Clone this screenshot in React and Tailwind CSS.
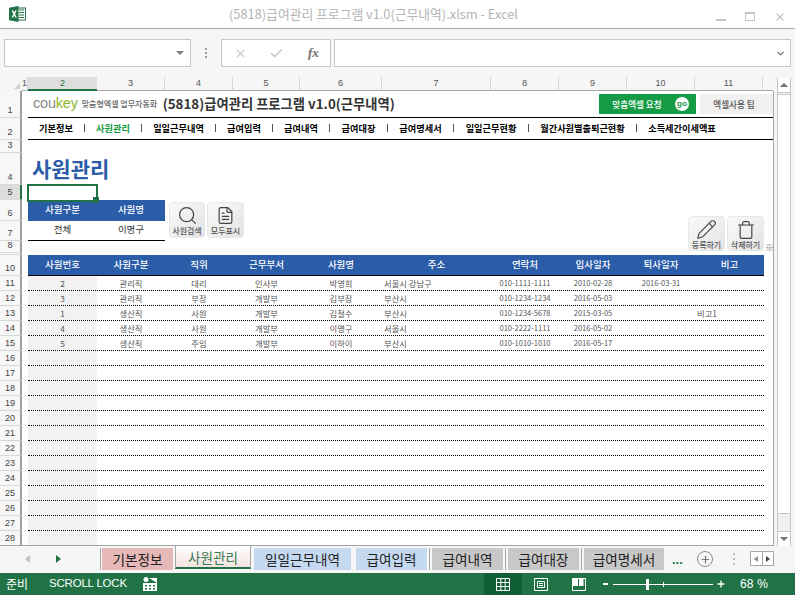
import React from "react";
import { Search, FileText, Pencil, Trash, Check, X, Plus, ChevronDown } from "lucide-react";

const COLS = "grid-cols-[69px_68px_68px_67px_82px_109px_68px_68px_68px_69px]";
const colLabels = [
  ["1", "w-[6px]"], ["2", "w-[69px]"], ["3", "w-[68px]"], ["4", "w-[68px]"], ["5", "w-[67px]"],
  ["6", "w-[82px]"], ["7", "w-[109px]"], ["8", "w-[68px]"], ["9", "w-[68px]"], ["10", "w-[68px]"], ["11", "w-[68px]"],
];
const nav = [
  ["기본정보", "w-[57px]"], ["사원관리", "w-[57px]"], ["일일근무내역", "w-[74px]"], ["급여입력", "w-[57px]"],
  ["급여내역", "w-[57px]"], ["급여대장", "w-[58px]"], ["급여명세서", "w-[66px]"], ["일일근무현황", "w-[75px]"],
  ["월간사원별출퇴근현황", "w-[108px]"], ["소득세간이세액표", "w-[90px]"],
];
const heads = ["사원번호", "사원구분", "직위", "근무부서", "사원명", "주소", "연락처", "입사일자", "퇴사일자", "비고"];
const rows = [
  ["2", "관리직", "대리", "인사부", "박영희", "서울시 강남구", "010-1111-1111", "2010-02-28", "2016-03-31", ""],
  ["3", "관리직", "부장", "개발부", "김부장", "부산시", "010-1234-1234", "2016-05-03", "", ""],
  ["1", "생산직", "사원", "개발부", "김철수", "부산시", "010-1234-5678", "2015-03-05", "", "비고1"],
  ["4", "생산직", "사원", "개발부", "이명구", "서울시", "010-2222-1111", "2016-05-02", "", ""],
  ["5", "생산직", "주임", "개발부", "이하이", "부산시", "010-1010-1010", "2016-05-17", "", ""],
];
const tabs = [
  ["기본정보", "w-[71px] bg-[#e6b8b7] ml-[1px]"],
  ["일일근무내역", "w-[97px] bg-[#c5d9f1] ml-[3px]"],
  ["급여입력", "w-[71px] bg-[#c5d9f1] ml-[5px]"],
];
const grayTabs = [["급여내역", "w-[71px]"], ["급여대장", "w-[71px]"], ["급여명세서", "w-[80px]"]];

function RowHead({ n, h, selected }) {
  return (
    <div
      className={`w-[22px] shrink-0 flex items-end justify-center pb-[1px] text-[9px] leading-[11px] text-[#444] border-b border-b-[#d8d8d8] border-r-2 ${selected ? "bg-[#dedede] border-r-[#217346]" : "bg-[#f7f7f7] border-r-[#9e9e9e]"}`}
      style={{ height: h, fontFamily: '"Liberation Sans", sans-serif' }}
    >
      {n}
    </div>
  );
}

function Row({ n, h, selected, children, className = "" }) {
  return (
    <div className="flex w-full" style={{ height: h }}>
      <RowHead n={n} h={h} selected={selected} />
      <div className={`flex-1 min-w-0 ${className}`}>{children}</div>
    </div>
  );
}

function ShapeButton({ className, icon, label }) {
  return (
    <div className={`absolute flex flex-col items-center rounded-[4px] border border-[#e8e8e8] bg-gradient-to-br from-[#fafafa] to-[#e2e3e5] ${className}`}>
      <div className="h-[21px] mt-[2px] flex items-center text-[#444]">{icon}</div>
      <div className="text-[8px] leading-[10px] text-[#555] font-medium whitespace-nowrap">{label}</div>
    </div>
  );
}

function ExcelLogo() {
  return (
    <svg width="17" height="16" viewBox="0 0 17 16">
      <rect x="6" y="2" width="10.5" height="12" fill="#fff" stroke="#217346" />
      <path d="M10 4h5M10 6.5h5M10 9h5M10 11.5h5" stroke="#217346" strokeWidth="1.2" />
      <path d="M0 1.8 9.5 0v16L0 14.2z" fill="#217346" />
      <path d="M2.5 4.6h1.7l1 2 1-2h1.6L6 8l1.9 3.4H6.200l-1-2.100-1 2.100H2.500L4.400 8z" fill="#fff" />
    </svg>
  );
}

export default function App() {
  return (
    <div
      className="w-[795px] h-[595px] overflow-hidden flex flex-col bg-[#f6f6f6]"
      style={{ fontFamily: '"Noto Sans CJK KR", "Liberation Sans", sans-serif' }}
    >
      {/* Title bar */}
      <div className="h-[29px] shrink-0 bg-white border-b border-[#a6a6a6] flex items-center relative">
        <div className="ml-[9px]"><ExcelLogo /></div>
        <div className="flex-1 text-center text-[12.8px] text-[#b4b4b4] pl-[4px] mr-[78px] whitespace-nowrap">
          (5818)급여관리 프로그램 v1.0(근무내역).xlsm - Excel
        </div>
        <div className="absolute right-[9px] top-[12px] flex items-start gap-[19px] text-[#b8b8b8]">
          <div className="w-[10px] h-[2px] mt-[7px] bg-[#c4c4c4]" />
          <div className="w-[10px] h-[9px] border border-[#c4c4c4] border-t-2" />
          <X size={12} strokeWidth={2.6} className="text-[#c4c4c4] -mt-[1px]" />
        </div>
      </div>

      {/* Formula bar */}
      <div className="h-[48px] shrink-0 flex items-start pt-[10px] pl-[4px]">
        <div className="w-[187px] h-[28px] bg-white border border-[#c6c6c6] flex items-center justify-end pr-[6px]">
          <div className="w-0 h-0 border-l-[4px] border-r-[4px] border-t-[4px] border-l-transparent border-r-transparent border-t-[#808080]" />
        </div>
        <div className="w-[30px] h-[28px] flex flex-col items-center justify-center gap-[2px]">
          <div className="w-[2px] h-[2px] bg-[#9a9a9a]" />
          <div className="w-[2px] h-[2px] bg-[#9a9a9a]" />
          <div className="w-[2px] h-[2px] bg-[#9a9a9a]" />
        </div>
        <div className="w-[110px] h-[28px] bg-white border border-[#c6c6c6] flex items-center pl-[12px]">
          <X size={13} strokeWidth={2} className="text-[#c8c8c8]" />
          <Check size={15} strokeWidth={2.4} className="text-[#c8c8c8] ml-[22px]" />
          <span className="ml-[24px] text-[13px] italic font-bold text-[#707070]" style={{ fontFamily: '"Liberation Serif", serif' }}>fx</span>
        </div>
        <div className="w-[457px] h-[28px] ml-[3px] bg-white border border-[#c6c6c6] flex items-center justify-end pr-[4px]">
          <ChevronDown size={11} strokeWidth={3} className="text-[#777]" />
        </div>
      </div>

      {/* Column headers */}
      <div className="h-[14px] shrink-0 flex" style={{ fontFamily: '"Liberation Sans", sans-serif' }}>
        <div className="w-[22px] flex items-end justify-end pr-[2px] pb-[2px]">
          <div className="w-0 h-0 border-l-[6px] border-b-[6px] border-l-transparent border-b-[#d0d0d0]" />
        </div>
        {colLabels.map(([c, w]) => (
          <div
            key={c}
            className={`${w} text-center text-[9px] leading-[13px] text-[#555] ${c === "2" ? "bg-[#dedede] border-b-2 border-b-[#217346] text-[#217346]" : "border-r border-r-[#d4d4d4] border-b border-b-[#a6a6a6]"}`}
          >
            {c}
          </div>
        ))}
        <div className="w-[10px] border-b border-b-[#a6a6a6]" />
      </div>

      {/* Sheet + scrollbar */}
      <div className="flex h-[455px] shrink-0">
        <div className="w-[774px] shrink-0 relative bg-white border-r border-r-[#a6a6a6] border-b border-b-[#a6a6a6] overflow-hidden">
          <Row n="1" h={27}>
            <div className="h-full ml-[6px] flex items-center justify-between border-b border-black">
              <div className="flex items-center pl-[5px] mb-[1px]">
                <span className="text-[14.5px] leading-none tracking-[-0.2px] text-[#8a8a8a]" style={{ fontFamily: '"Liberation Sans", sans-serif' }}>
                  cou<span className="text-[#8cb82b]">key</span>
                </span>
                <span className="text-[8px] ml-[4px] w-[74px] whitespace-nowrap font-medium text-[#666]">맞춤형엑셀 업무자동화</span>
                <span className="ml-[7px] text-[13.300px] font-bold text-[#333] whitespace-nowrap">(5818)급여관리 프로그램 v1.0(근무내역)</span>
              </div>
              <div className="flex items-center gap-[4px]">
                <div className="w-[97px] h-[20px] bg-[#169b45] flex items-center text-white">
                  <span className="w-[76px] text-center text-[8.6px] font-medium whitespace-nowrap">맞춤엑셀 요청</span>
                  <span className="w-[14px] h-[14px] rounded-full bg-white text-[#169b45] text-[8px] font-bold leading-[13px] text-center" style={{ fontFamily: '"Liberation Sans", sans-serif' }}>go</span>
                </div>
                <div className="w-[73px] h-[20px] pr-[5px] bg-[#f0f0f0] text-[#555] text-[8.6px] font-medium flex items-center justify-center">엑셀사용 팁</div>
              </div>
            </div>
          </Row>
          <Row n="2" h={22}>
            <div className="h-full ml-[6px] flex items-center border-b border-black text-[9.2px] font-bold text-black whitespace-nowrap">
              {nav.map(([t, w], i) => (
                <div key={t} className={`${w} shrink-0 flex items-center`}>
                  <span className={`flex-1 text-center ${i === 1 ? "text-[#169b45]" : ""}`}>{t}</span>
                  {i < nav.length - 1 && <span className="w-[1px] h-[8px] bg-[#555] shrink-0" />}
                </div>
              ))}
            </div>
          </Row>
          <Row n="3" h={13} />
          <Row n="4" h={32}>
            <div className="h-full pl-[10px] pb-[3px] flex items-end text-[21px] leading-[28px] font-bold text-[#2b5ca8]">사원관리</div>
          </Row>
          <Row n="5" h={15} selected />
          <Row n="6" h={21}>
            <div className="ml-[6px] w-[137px] h-full pb-[2px] bg-[#2b5ca8] flex items-center text-white text-[9.5px] font-medium">
              <span className="w-[69px] text-center">사원구분</span>
              <span className="w-[68px] text-center">사원명</span>
            </div>
          </Row>
          <Row n="7" h={20}>
            <div className="ml-[6px] w-[137px] h-full pb-[2px] border-b border-black flex items-center text-[#333] text-[9.5px]">
              <span className="w-[69px] text-center">전체</span>
              <span className="w-[68px] text-center">이명구</span>
            </div>
          </Row>
          <Row n="8" h={12} />
          <Row n="" h={2} />
          <Row n="10" h={21}>
            <div className={`h-full ml-[6px] w-[736px] grid ${COLS} bg-[#2b5ca8] border-b border-black`}>
              {heads.map((t) => (
                <div key={t} className="h-full pb-[1px] flex items-center justify-center text-white text-[9.5px] font-medium">{t}</div>
              ))}
            </div>
          </Row>
          {Array.from({ length: 18 }, (_, i) => {
            const d = rows[i] || Array(10).fill("");
            const last = i === 17;
            return (
              <Row key={i} n={String(i + 11)} h={15}>
                <div className={`h-full ml-[6px] w-[736px] grid ${COLS} ${last ? "" : "border-b border-dotted border-black"}`}>
                  {d.map((v, j) => (
                    <div
                      key={j}
                      className={`h-full flex items-center whitespace-nowrap text-[#555] ${j >= 6 && j <= 8 ? "text-[7.5px]" : "text-[8.3px]"} ${j === 0 ? "bg-[#f2f2f2]" : ""} ${j === 5 || j === 9 ? "justify-start pl-[2px]" : "justify-center"}`}
                    >
                      {v}
                    </div>
                  ))}
                </div>
              </Row>
            );
          })}

          {/* Floating objects over the sheet */}
          <div className="absolute left-[27px] top-[93px] w-[71px] h-[18px] border-2 border-[#217346]" />
          <div className="absolute left-[93px] top-[106px] w-[6px] h-[6px] bg-[#217346]" />
          <ShapeButton className="left-[169px] top-[111px] w-[36px] h-[36px]" icon={<Search size={21} strokeWidth={1.4} />} label="사원검색" />
          <ShapeButton className="left-[207px] top-[111px] w-[37px] h-[36px]" icon={<FileText size={19} strokeWidth={1.5} />} label="모두표시" />
          <ShapeButton className="left-[688px] top-[125px] w-[37px] h-[35px]" icon={<Pencil size={21} strokeWidth={1.3} />} label="등록하기" />
          <ShapeButton className="left-[727px] top-[125px] w-[37px] h-[35px]" icon={<Trash size={20} strokeWidth={1.4} />} label="삭제하기" />
          <div className="absolute left-[765px] top-[152px] text-[9px] leading-[10px] text-[#8a6a6a]">※</div>
        </div>

        {/* Vertical scrollbar */}
        <div className="ml-[3px] w-[14px] bg-[#f0f0f0] border-l border-r border-[#c6c6c6] flex flex-col -mt-[13px] h-[468px]">
          <div className="h-[15px] bg-white border-b border-[#c6c6c6] flex items-center justify-center">
            <div className="w-0 h-0 border-l-[4px] border-r-[4px] border-b-[4px] border-l-transparent border-r-transparent border-b-[#707070]" />
          </div>
          <div className="h-[420px] mt-[1px] bg-white border-y border-[#c6c6c6]" />
          <div className="flex-1" />
          <div className="h-[15px] bg-white border-t border-[#c6c6c6] flex items-center justify-center">
            <div className="w-0 h-0 border-l-[4px] border-r-[4px] border-t-[4px] border-l-transparent border-r-transparent border-t-[#707070]" />
          </div>
        </div>
      </div>

      {/* Sheet tabs */}
      <div className="h-[27px] shrink-0 flex items-start pt-[2px] text-[13.600px] text-[#222]">
        <div className="w-[100px] h-[22px] flex items-center">
          <div className="ml-[25px] w-0 h-0 border-t-[4px] border-b-[4px] border-r-[5px] border-t-transparent border-b-transparent border-r-[#c0c0c0]" />
          <div className="ml-[26px] w-0 h-0 border-t-[4px] border-b-[4px] border-l-[5px] border-t-transparent border-b-transparent border-l-[#217346]" />
        </div>
        <div className="w-[1px] h-[22px] bg-[#a8a8a8]" />
        <div className={`${tabs[0][1]} h-[22px] flex items-center justify-center`}>{tabs[0][0]}</div>
        <div className="ml-[2px] w-[76px] h-[23px] -mt-[2px] pt-[2px] bg-gradient-to-b from-white to-[#f3e3e1] border-b-2 border-x border-x-[#a8a8a8] border-b-[#217346] flex items-center justify-center text-[#3a7a50]">사원관리</div>
        <div className={`${tabs[1][1]} h-[22px] flex items-center justify-center`}>{tabs[1][0]}</div>
        <div className={`${tabs[2][1]} h-[22px] flex items-center justify-center`}>{tabs[2][0]}</div>
        {grayTabs.map(([t, w]) => (
          <React.Fragment key={t}>
            <div className="ml-[2px] w-[1px] h-[22px] bg-[#a8a8a8]" />
            <div className={`${w} ml-[2px] h-[22px] bg-[#c8c8c8] flex items-center justify-center`}>{t}</div>
          </React.Fragment>
        ))}
        <div className="ml-[8px] w-[24px] h-[22px] text-[#217346] font-bold text-[13px] leading-[24px]" style={{ fontFamily: '"Liberation Sans", sans-serif' }}>...</div>
        <div className="ml-[1px] mt-[3px] w-[16px] h-[16px] rounded-full border-[1.5px] border-[#8a8a8a] flex items-center justify-center">
          <Plus size={11} strokeWidth={2.6} className="text-[#777]" />
        </div>
        <div className="ml-[20px] mt-[5px] flex flex-col gap-[3px]">
          <div className="w-[2px] h-[2px] bg-[#bdbdbd]" />
          <div className="w-[2px] h-[2px] bg-[#bdbdbd]" />
          <div className="w-[2px] h-[2px] bg-[#bdbdbd]" />
        </div>
        <div className="ml-[15px] mt-[3px] w-[24px] h-[15px] bg-white border border-[#a8a8a8] flex">
          <div className="flex-1 border-r border-[#a8a8a8] flex items-center justify-center">
            <div className="w-0 h-0 border-t-[3.5px] border-b-[3.5px] border-r-[4px] border-t-transparent border-b-transparent border-r-[#888]" />
          </div>
          <div className="flex-1 flex items-center justify-center">
            <div className="w-0 h-0 border-t-[3.5px] border-b-[3.5px] border-l-[4px] border-t-transparent border-b-transparent border-l-[#444]" />
          </div>
        </div>
      </div>

      {/* Status bar */}
      <div className="h-[22px] shrink-0 bg-[#217346] text-white flex items-center text-[12px]">
        <span className="ml-[6px] w-[43px]">준비</span>
        <span className="w-[94px] text-[11.5px] tracking-[-0.2px] whitespace-nowrap" style={{ fontFamily: '"Liberation Sans", sans-serif' }}>SCROLL LOCK</span>
        <svg width="14" height="14" viewBox="0 0 14 14">
          <circle cx="3" cy="2.500" r="2.500" fill="#fff" />
          <path d="M6 1h8v13H0V6h14" fill="#fff" />
          <path d="M2 8h2v1.500H2zM6 8h2v1.500H6zM10 8h2v1.500h-2zM2 11h2v1.500H2zM6 11h2v1.500H6zM10 11h2v1.500h-2z" fill="#217346" />
        </svg>
        <div className="ml-[327px] w-[38px] h-[22px] bg-[#0f5f33] flex items-center justify-center">
          <svg width="14" height="13" viewBox="0 0 14 13" fill="none" stroke="#fff">
            <path d="M.5.500h13v12H.500zM.500 4.500h13M.500 8.500h13M4.800.500v12M9.200.500v12" />
          </svg>
        </div>
        <div className="ml-[12px]">
          <svg width="14" height="13" viewBox="0 0 14 13" fill="none" stroke="#fff">
            <path d="M.5.500h13v12H.500z" />
            <path d="M3.500 3.500h7v6h-7zM5 5.500h4M5 7.500h4" />
          </svg>
        </div>
        <div className="ml-[24px]">
          <svg width="14" height="13" viewBox="0 0 14 13">
            <path d="M.5.500h13v12H.500z" fill="none" stroke="#fff" />
            <path d="M1 1h5v7H1zM7 1h4.500v7H7z" fill="#fff" />
          </svg>
        </div>
        <div className="ml-[17px] w-[5px] h-[2px] bg-white" />
        <div className="ml-[5px] w-[100px] h-[1px] bg-white relative">
          <div className="absolute left-[33px] -top-[5px] w-[3px] h-[11px] bg-white" />
          <div className="absolute left-[50px] -top-[2px] w-[1px] h-[5px] bg-white" />
        </div>
        <Plus size={10} strokeWidth={3.4} className="ml-[3px]" />
        <span className="ml-[14px] text-[12px] tracking-[0.2px] whitespace-nowrap" style={{ fontFamily: '"Liberation Sans", sans-serif' }}>68 %</span>
      </div>
    </div>
  );
}
